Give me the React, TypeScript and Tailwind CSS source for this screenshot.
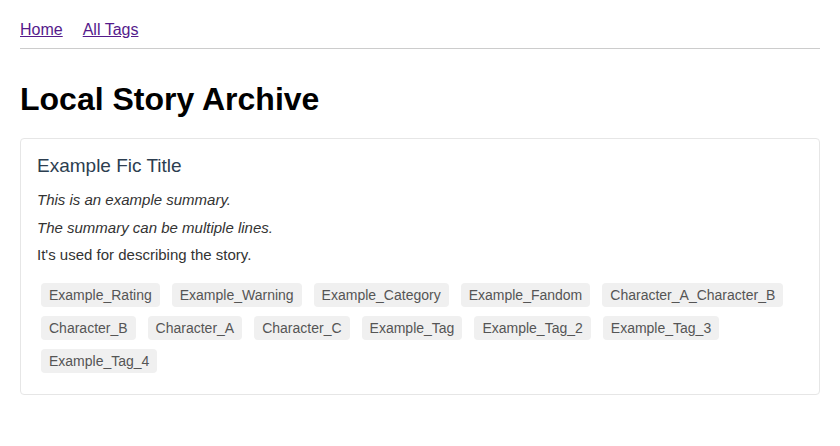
import React from "react";

const tags = [
  "Example_Rating",
  "Example_Warning",
  "Example_Category",
  "Example_Fandom",
  "Character_A_Character_B",
  "Character_B",
  "Character_A",
  "Character_C",
  "Example_Tag",
  "Example_Tag_2",
  "Example_Tag_3",
  "Example_Tag_4",
];

const App = () => {
  return (
    <div className="min-h-screen bg-white p-5 font-['Liberation_Sans',Arial,sans-serif] text-black">
      <nav className="flex gap-5 border-b border-[#cccccc] pt-px pb-[9px] text-base leading-[18px]">
        <a href="#" className="text-[#551a8b] underline">
          Home
        </a>
        <a href="#" className="text-[#551a8b] underline">
          All Tags
        </a>
      </nav>
      <h1 className="mt-8 mb-5 text-[32px] font-bold leading-[37px]">Local Story Archive</h1>
      <div className="rounded border border-[#e6e6e6] p-4">
        <h3 className="text-[19px] leading-[22px] text-[#2c3e50]">Example Fic Title</h3>
        <div className="mt-[9px] text-[15px] leading-[27.5px] text-[#333333]">
          <p className="italic">This is an example summary.</p>
          <p className="italic">The summary can be multiple lines.</p>
          <p>It's used for describing the story.</p>
        </div>
        <div className="mt-[14px] flex flex-wrap gap-x-3 gap-y-[9px] pl-1 pb-[5px]">
          {tags.map((tag) => (
            <span
              key={tag}
              className="rounded bg-[#f0f0f0] px-2 text-sm leading-6 text-[#555555]"
            >
              {tag}
            </span>
          ))}
        </div>
      </div>
    </div>
  );
};

export default App;
